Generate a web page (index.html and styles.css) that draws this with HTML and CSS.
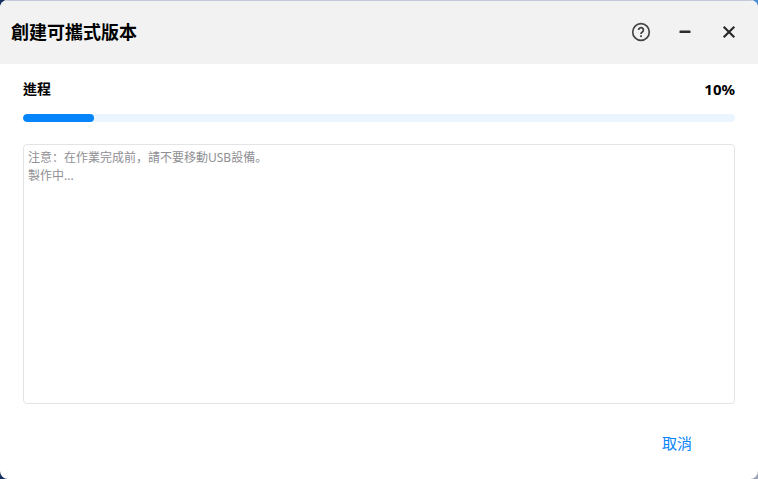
FILE: index.html
```html
<!DOCTYPE html>
<html lang="zh-Hant">
<head>
<meta charset="utf-8">
<title>創建可攜式版本</title>
<link rel="stylesheet" href="styles.css">
</head>
<body>
<div class="dialog">
  <header class="titlebar">
    <h1 class="title">創建可攜式版本</h1>
    <div class="actions">
      <svg class="icon" viewBox="0 0 20 20" aria-hidden="true">
        <circle cx="10" cy="10" r="8.3" fill="none" stroke="#444" stroke-width="1.7"/>
        <path d="M7.6 8a2.4 2.4 0 1 1 3.7 2c-.9.6-1.3 1-1.3 2" fill="none" stroke="#444" stroke-width="1.8"/>
        <rect x="9.1" y="13.3" width="1.8" height="1.8" fill="#444"/>
      </svg>
      <svg class="icon" viewBox="0 0 20 20" aria-hidden="true">
        <rect x="4.5" y="8.5" width="11" height="2.6" rx=".6" fill="#2b2b2b"/>
      </svg>
      <svg class="icon" viewBox="0 0 20 20" aria-hidden="true">
        <path d="M4.7 4.7l10.6 10.6M15.3 4.7L4.7 15.3" fill="none" stroke="#2b2b2b" stroke-width="2.2"/>
      </svg>
    </div>
  </header>
  <main class="content">
    <div class="progress-head">
      <span>進程</span>
      <span class="percent">10%</span>
    </div>
    <div class="track"><div class="fill" style="width:10%"></div></div>
    <div class="log" lang="zh-Hans">注意：在作業完成前，請不要移動USB設備。<br>製作中...</div>
  </main>
  <footer class="footer">
    <button class="cancel" type="button">取消</button>
  </footer>
</div>
</body>
</html>
```
FILE: styles.css
```css
* { box-sizing: border-box; }
html, body { margin: 0; height: 100%; }
body {
  width: 758px;
  height: 479px;
  overflow: hidden;
  background: conic-gradient(#4a8fd6 0 90deg, #9aa3b5 90deg 180deg, #16305f 180deg 360deg);
  font-family: "Noto Sans", "Noto Sans CJK TC", sans-serif;
}
.dialog {
  width: 758px;
  height: 479px;
  background: #fff;
  border-radius: 8px;
  overflow: hidden;
  display: flex;
  flex-direction: column;
}
.titlebar {
  height: 64px;
  flex: none;
  background: #f2f2f3;
  border-top: 1px solid #c3c9d8;
  display: flex;
  align-items: center;
  justify-content: space-between;
  padding: 0 19px 2px 11px;
}
.title {
  margin: 0;
  font-size: 18px;
  font-weight: 700;
  color: #000;
  line-height: 24px;
}
.actions { display: flex; gap: 24px; }
.icon { width: 20px; height: 20px; display: block; }
.content {
  flex: 1;
  display: flex;
  flex-direction: column;
  padding: 14px 23px 0;
}
.progress-head {
  display: flex;
  justify-content: space-between;
  align-items: center;
  height: 22px;
  padding-bottom: 2px;
  font-size: 14px;
  font-weight: 700;
  color: #000;
}
.percent { font-size: 15px; line-height: 22px; margin-top: 1px; }
.track {
  margin-top: 14px;
  height: 8px;
  border-radius: 4px;
  background: #ebf5ff;
  overflow: hidden;
}
.fill { height: 100%; background: #0684fb; border-radius: 4px; }
.log {
  margin-top: 22px;
  height: 260px;
  border: 1px solid #e4e4e7;
  border-radius: 4px;
  padding: 4px;
  font-family: "Noto Sans", "Noto Sans CJK SC", sans-serif;
  font-size: 12px;
  line-height: 18px;
  color: #8f8f94;
}
.footer {
  height: 80px;
  flex: none;
  display: flex;
  justify-content: flex-end;
  padding: 0 66px 0 0;
  align-items: flex-start;
}
.cancel {
  margin-top: 28px;
  padding: 0;
  border: 0;
  background: none;
  font: inherit;
  font-size: 15px;
  line-height: 22px;
  color: #0684fb;
}
```
